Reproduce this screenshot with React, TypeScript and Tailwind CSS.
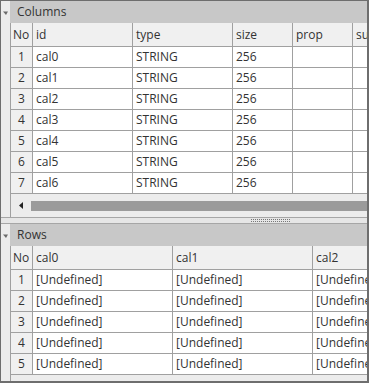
import React from 'react';

const font = { fontFamily: '"Open Sans", "Noto Sans", sans-serif' };

const colCols = [
  { key: 'id', label: 'id', w: 'w-[100px]' },
  { key: 'type', label: 'type', w: 'w-[100px]' },
  { key: 'size', label: 'size', w: 'w-[60px]' },
  { key: 'prop', label: 'prop', w: 'w-[60px]' },
  { key: 'su', label: 'su', w: 'w-[60px]' },
];

const columnRows = Array.from({ length: 7 }).map((_, i) => ({
  id: `cal${i}`,
  type: 'STRING',
  size: '256',
  prop: '',
  su: '',
}));

const rowCols = [
  { key: 'cal0', label: 'cal0', w: 'w-[140px]' },
  { key: 'cal1', label: 'cal1', w: 'w-[140px]' },
  { key: 'cal2', label: 'cal2', w: 'w-[140px]' },
];

const Triangle = () => (
  <svg width="6" height="5" viewBox="0 0 6 5" className="mt-[10px] ml-[2px]">
    <polygon points="0,0.5 5,0.5 3,4" fill="#6b6b6b" />
  </svg>
);

const SectionHeader = ({ title }: { title: string }) => (
  <div className="h-[22px] bg-[#c8c8c8] flex items-center pl-[7px] text-[12px] text-[#333]">
    {title}
  </div>
);

const Grid = ({
  cols,
  rows,
}: {
  cols: { key: string; label: string; w: string }[];
  rows: Record<string, string>[];
}) => (
  <div className="overflow-hidden border-l border-[#a0a0a0]">
    <div className="flex h-[24px] bg-[#f0f0f0] border-b border-[#a0a0a0]">
      <div className="w-[22px] shrink-0 border-r border-[#a0a0a0] pl-[2px] flex items-center">No</div>
      {cols.map(c => (
        <div key={c.key} className={`${c.w} shrink-0 border-r border-[#a0a0a0] pl-[3px] flex items-center`}>
          {c.label}
        </div>
      ))}
    </div>
    {rows.map((r, i) => (
      <div key={i} className="flex h-[21px] border-b border-[#a0a0a0]">
        <div className="w-[22px] shrink-0 bg-[#f0f0f0] border-r border-[#a0a0a0] flex items-center justify-center">
          {i + 1}
        </div>
        {cols.map(c => (
          <div key={c.key} className={`${c.w} shrink-0 bg-white border-r border-[#a0a0a0] pl-[3px] flex items-center whitespace-nowrap overflow-hidden`}>
            {r[c.key]}
          </div>
        ))}
      </div>
    ))}
  </div>
);

const App = () => {
  const undefinedRows = Array.from({ length: 5 }).map(() => ({
    cal0: '[Undefined]',
    cal1: '[Undefined]',
    cal2: '[Undefined]',
  }));

  return (
    <div
      style={font}
      className="w-[369px] h-[383px] overflow-hidden flex flex-col bg-[#f0f0f0] border-t border-l border-r-2 border-b-2 border-[#6e6e6e] text-[12px] text-[#333] leading-none"
    >
      {/* Columns panel */}
      <div className="flex h-[216px]">
        <div className="w-[9px] shrink-0 bg-[#ececec]">
          <Triangle />
        </div>
        <div className="flex-1 min-w-0 flex flex-col">
          <SectionHeader title="Columns" />
          <Grid cols={colCols} rows={columnRows} />
          <div className="flex-1 flex items-center border-l border-[#a0a0a0] bg-[#ececec]">
            <div className="w-[20px] flex justify-center">
              <svg width="4" height="7" viewBox="0 0 4 7">
                <polygon points="4,0 4,7 0,3.5" fill="#222" />
              </svg>
            </div>
            <div className="flex-1 h-[10px] bg-[#9b9b9b]" />
          </div>
        </div>
      </div>

      {/* splitter */}
      <div className="h-[7px] bg-[#e6e6e6] border-t border-b border-[#a6a6a6] flex justify-center items-center">
        <div className="ml-[172px] flex flex-col gap-[1px]">
          <div className="flex gap-[1px]">
            {Array.from({ length: 20 }).map((_, i) => (
              <span key={i} className="w-[1px] h-[1px] bg-[#777]" />
            ))}
          </div>
          <div className="flex gap-[1px]">
            {Array.from({ length: 20 }).map((_, i) => (
              <span key={i} className="w-[1px] h-[1px] bg-[#777]" />
            ))}
          </div>
        </div>
      </div>

      {/* Rows panel */}
      <div className="flex flex-1">
        <div className="w-[9px] shrink-0 bg-[#ececec]">
          <Triangle />
        </div>
        <div className="flex-1 min-w-0 flex flex-col">
          <SectionHeader title="Rows" />
          <Grid cols={rowCols} rows={undefinedRows} />
          <div className="flex-1 border-l border-[#a0a0a0] bg-[#ececec]" />
        </div>
      </div>
    </div>
  );
};

export default App;
